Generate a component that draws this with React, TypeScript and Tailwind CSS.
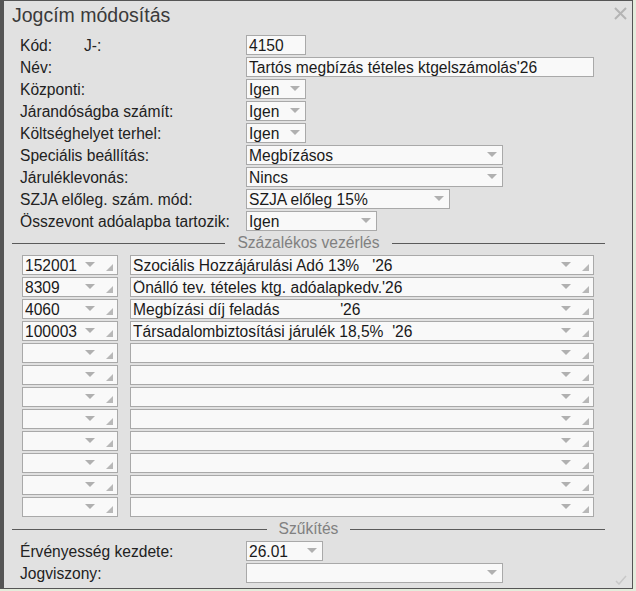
import React from 'react';

const font = { fontFamily: '"Liberation Sans", Arial, sans-serif' };

function Arrow() {
  return (
    <svg width="10" height="6" viewBox="0 0 10 6" className="shrink-0">
      <polygon points="0,0 10,0 5,5" fill="#b0b0b0" />
    </svg>
  );
}

function Grip() {
  return (
    <svg width="7" height="7" viewBox="0 0 7 7" className="shrink-0">
      <polygon points="7,0 7,7 0,7" fill="#b8b8b8" />
    </svg>
  );
}

function TextBox({ value, width }: { value: string; width: string }) {
  return (
    <div
      className={`${width} h-[20px] border border-[#a9a9a9] bg-[#f9f9f9] pl-[2px] flex items-center text-[15.6px] text-[#1a1a1a] leading-none`}
    >
      <span className="mt-[2px] whitespace-pre">{value}</span>
    </div>
  );
}

function Select({ value, width }: { value: string; width: string }) {
  return (
    <div
      className={`${width} h-[20px] border border-[#a9a9a9] bg-[#f9f9f9] pl-[2px] pr-[5px] flex items-center text-[15.6px] text-[#1a1a1a] leading-none`}
    >
      <span className="flex-1 mt-[2px] whitespace-pre">{value}</span>
      <Arrow />
    </div>
  );
}

function Combo({ value, width }: { value: string; width: string }) {
  return (
    <div
      className={`${width} h-[20px] border border-[#a9a9a9] bg-[#f9f9f9] pl-[2px] pr-[4px] flex items-center text-[15.6px] text-[#1a1a1a] leading-none`}
    >
      <span className="flex-1 mt-[2px] whitespace-pre overflow-hidden">{value}</span>
      <Arrow />
      <span className="w-[11px]" />
      <span className="self-end mb-[3px]">
        <Grip />
      </span>
    </div>
  );
}

function Row({ label, children }: { label: React.ReactNode; children: React.ReactNode }) {
  return (
    <div className="flex h-[20px] items-center">
      <div className="w-[226px] mt-[2px] text-[15.6px] text-[#222] leading-none">{label}</div>
      {children}
    </div>
  );
}

function Divider({ title }: { title: string }) {
  return (
    <div className="ml-[8px] w-[593px] h-[24px] flex items-center gap-3">
      <div className="flex-1 h-px bg-[#5a5a5a]" />
      <span className="text-[15.6px] text-[#808080] leading-none">{title}</span>
      <div className="flex-1 h-px bg-[#5a5a5a]" />
    </div>
  );
}

const tetelek = [
  ['152001', "Szociális Hozzájárulási Adó 13%   '26"],
  ['8309', "Önálló tev. tételes ktg. adóalapkedv.'26"],
  ['4060', "Megbízási díj feladás              '26"],
  ['100003', "Társadalombiztosítási járulék 18,5%  '26"],
  ['', ''],
  ['', ''],
  ['', ''],
  ['', ''],
  ['', ''],
  ['', ''],
  ['', ''],
  ['', ''],
];

export default function App() {
  return (
    <div className="w-[636px] h-[591px] bg-[#e4ecdc]" style={font}>
      <div className="relative w-[633px] h-[589px] bg-[#e1e1e1] border-l-4 border-t border-r border-b border-[#555]">
        {/* bezárás */}
        <svg
          className="absolute top-[6px] right-[5px]"
          width="13"
          height="13"
          viewBox="0 0 13 13"
        >
          <path d="M1 1 L12 12 M12 1 L1 12" stroke="#b4b4b4" strokeWidth="2" />
        </svg>

        {/* cím */}
        <div className="h-[34px] pl-[8px] pt-[2px] text-[19.5px] leading-[24px] text-[#3a3a3a]">
          Jogcím módosítás
        </div>

        {/* alapadatok */}
        <div className="pl-[16px] flex flex-col gap-[2px]">
          <Row
            label={
              <span className="flex">
                <span className="w-[64px]">Kód:</span>
                <span>J-:</span>
              </span>
            }
          >
            <TextBox value="4150" width="w-[60px]" />
          </Row>
          <Row label="Név:">
            <TextBox value="Tartós megbízás tételes ktgelszámolás'26" width="w-[348px]" />
          </Row>
          <Row label="Központi:">
            <Select value="Igen" width="w-[60px]" />
          </Row>
          <Row label="Járandóságba számít:">
            <Select value="Igen" width="w-[60px]" />
          </Row>
          <Row label="Költséghelyet terhel:">
            <Select value="Igen" width="w-[60px]" />
          </Row>
          <Row label="Speciális beállítás:">
            <Select value="Megbízásos" width="w-[257px]" />
          </Row>
          <Row label="Járuléklevonás:">
            <Select value="Nincs" width="w-[257px]" />
          </Row>
          <Row label="SZJA előleg. szám. mód:">
            <Select value="SZJA előleg 15%" width="w-[204px]" />
          </Row>
          <Row label="Összevont adóalapba tartozik:">
            <Select value="Igen" width="w-[131px]" />
          </Row>
        </div>

        <Divider title="Százalékos vezérlés" />

        {/* tételek */}
        <div className="pl-[18px] flex flex-col gap-[2px]">
          {tetelek.map(([kod, nev], i) => (
            <div key={i} className="flex gap-[12px]">
              <Combo value={kod} width="w-[96px]" />
              <Combo value={nev} width="w-[464px]" />
            </div>
          ))}
        </div>

        <Divider title="Szűkítés" />

        <div className="pl-[16px] flex flex-col gap-[2px]">
          <Row label="Érvényesség kezdete:">
            <Select value="26.01" width="w-[77px]" />
          </Row>
          <Row label="Jogviszony:">
            <Select value="" width="w-[257px]" />
          </Row>
        </div>

        {/* mentés */}
        <svg
          className="absolute bottom-[3px] right-[5px]"
          width="12"
          height="10"
          viewBox="0 0 12 10"
        >
          <path d="M1 6 L4 9 L11 1" stroke="#c8c8c8" strokeWidth="1.5" fill="none" />
        </svg>
      </div>
    </div>
  );
}
